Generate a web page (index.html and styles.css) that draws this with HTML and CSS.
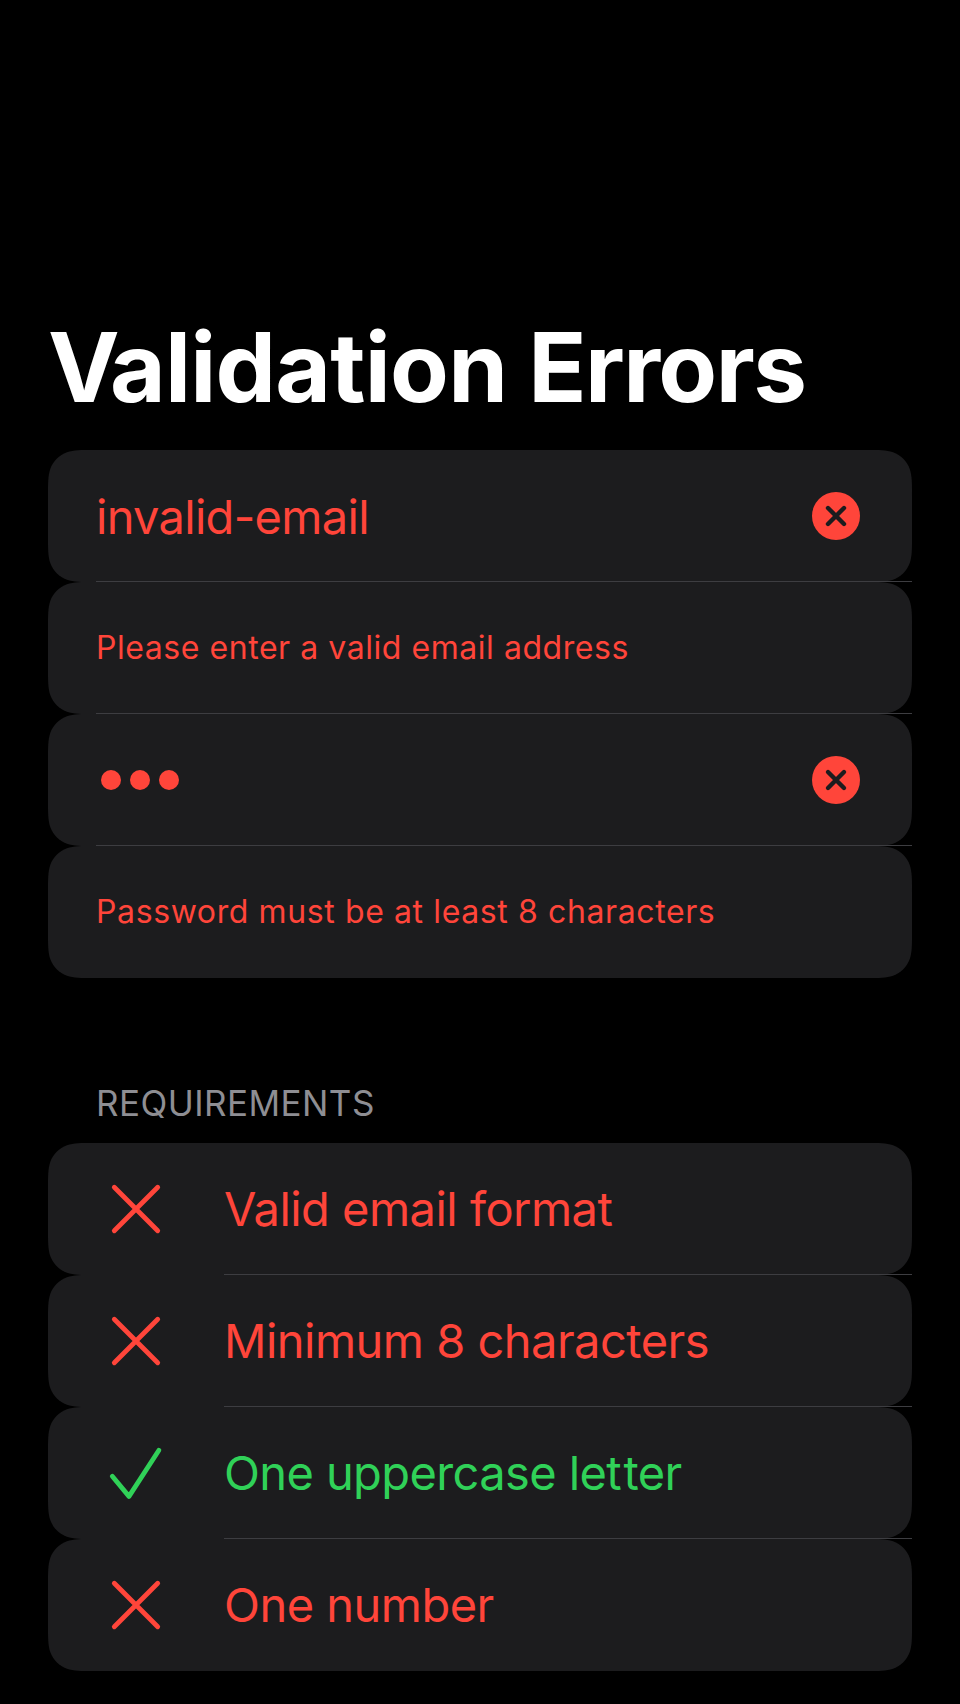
FILE: index.html
```html
<!DOCTYPE html>
<html lang="en">
<head>
<meta charset="utf-8">
<title>Validation Errors</title>
<link rel="stylesheet" href="styles.css">
</head>
<body>
<main class="screen">
  <h1 class="title"><span class="cap">V</span><span class="first">alidation</span> <span>Errors</span></h1>
  <section class="group">
    <div class="row">
      <span class="value">invalid-email</span>
      <svg class="clear" viewBox="0 0 48 48"><circle cx="24" cy="24" r="24"/><path d="M16 16l16 16M32 16l-16 16"/></svg>
    </div>
    <div class="row"><span class="caption cap-email">Please enter a valid email address</span></div>
    <div class="row">
      <span class="dots"><i></i><i></i><i></i></span>
      <svg class="clear" viewBox="0 0 48 48"><circle cx="24" cy="24" r="24"/><path d="M16 16l16 16M32 16l-16 16"/></svg>
    </div>
    <div class="row"><span class="caption cap-pass">Password must be at least 8 characters</span></div>
  </section>
  <h2 class="heading"><span>REQUIREMENTS</span></h2>
  <section class="group checks">
    <div class="row">
      <svg class="mark" viewBox="0 0 56 56"><path d="M6.3 6.3l43.4 43.4M49.7 6.3L6.3 49.7"/></svg>
      <span class="label l1">Valid email format</span>
    </div>
    <div class="row">
      <svg class="mark" viewBox="0 0 56 56"><path d="M6.3 6.3l43.4 43.4M49.7 6.3L6.3 49.7"/></svg>
      <span class="label l2">Minimum 8 characters</span>
    </div>
    <div class="row ok">
      <svg class="mark" viewBox="0 0 56 56"><path d="M4.3 31.3L21 51.4L50.9 5.2"/></svg>
      <span class="label l3">One uppercase le<span class="loose">t</span>ter</span>
    </div>
    <div class="row">
      <svg class="mark" viewBox="0 0 56 56"><path d="M6.3 6.3l43.4 43.4M49.7 6.3L6.3 49.7"/></svg>
      <span class="label l4">One number</span>
    </div>
  </section>
</main>
</body>
</html>
```
FILE: styles.css
```css
* { box-sizing: border-box; }
body {
  margin: 0;
  background: #000;
  font-family: Inter, "Liberation Sans", sans-serif;
  font-optical-sizing: auto;
}
.screen {
  height: 1704px;
  padding: 307px 48px 0;
  overflow: hidden;
}
.title {
  margin: 0;
  height: 143px;
  font-size: 96px;
  line-height: 120px;
  font-weight: 700;
  letter-spacing: -1.6px;
  color: #fff;
  white-space: nowrap;
}
.cap { letter-spacing: -9.6px; }
.first { letter-spacing: -0.75px; }
.group { color: #ff453a; }
.row {
  position: relative;
  z-index: 0;
  display: flex;
  align-items: center;
  height: 132px;
  padding: 0 52px 0 48px;
  white-space: nowrap;
}
/* card surface with continuous corners */
.row::before {
  content: "";
  position: absolute;
  z-index: -1;
  inset: 0;
  background: #1c1c1e;
  clip-path: path("M45.86 0H818.14C831.35 0 837.95 0 845.06 2.25C852.82 5.07 858.93 11.18 861.75 18.94C864 26.05 864 32.65 864 45.86V86.14C864 99.35 864 105.95 861.75 113.06C858.93 120.82 852.82 126.93 845.06 129.75C837.95 132 831.35 132 818.14 132H45.86C32.65 132 26.05 132 18.94 129.75C11.18 126.93 5.07 120.82 2.25 113.06C0 105.95 0 99.35 0 86.14V45.86C0 32.65 0 26.05 2.25 18.94C5.07 11.18 11.18 5.07 18.94 2.25C26.05 0 32.65 0 45.86 0Z");
}
.row:not(:last-child)::after {
  content: "";
  position: absolute;
  left: 48px;
  right: 0;
  bottom: 0;
  height: 1px;
  background: #3d3d41;
}
.checks .row:not(:last-child)::after { left: 176px; }
.value { font-size: 47px; line-height: 60px; letter-spacing: -0.7px; padding-top: 2px; }
.caption { font-size: 32px; line-height: 40px; letter-spacing: 0.55px; }
.cap-pass { letter-spacing: 0.61px; }
.label { font-size: 47px; line-height: 60px; letter-spacing: -0.52px; }
.l3 { letter-spacing: -0.6px; }
.loose { letter-spacing: 1.8px; }
.clear {
  width: 48px;
  height: 48px;
  margin-left: auto;
}
.clear circle { fill: #ff453a; }
.clear path {
  fill: none;
  stroke: #1c1c1e;
  stroke-width: 4.4;
  stroke-linecap: round;
}
.dots {
  display: flex;
  gap: 8.6px;
  padding-left: 4.8px;
}
.dots i {
  width: 20.4px;
  height: 20.4px;
  border-radius: 50%;
  background: #ff453a;
}
.heading {
  margin: 0;
  height: 165px;
  padding: 103px 48px 0;
  font-size: 35px;
  line-height: 44px;
  font-weight: 400;
  letter-spacing: 0.45px;
  color: #8e8e93;
}
.mark {
  width: 56px;
  height: 56px;
  margin: 0 60px 0 12px;
  fill: none;
  stroke: currentColor;
  stroke-width: 4.8;
  stroke-linecap: round;
  stroke-linejoin: round;
}
.ok { color: #30d158; }
```
